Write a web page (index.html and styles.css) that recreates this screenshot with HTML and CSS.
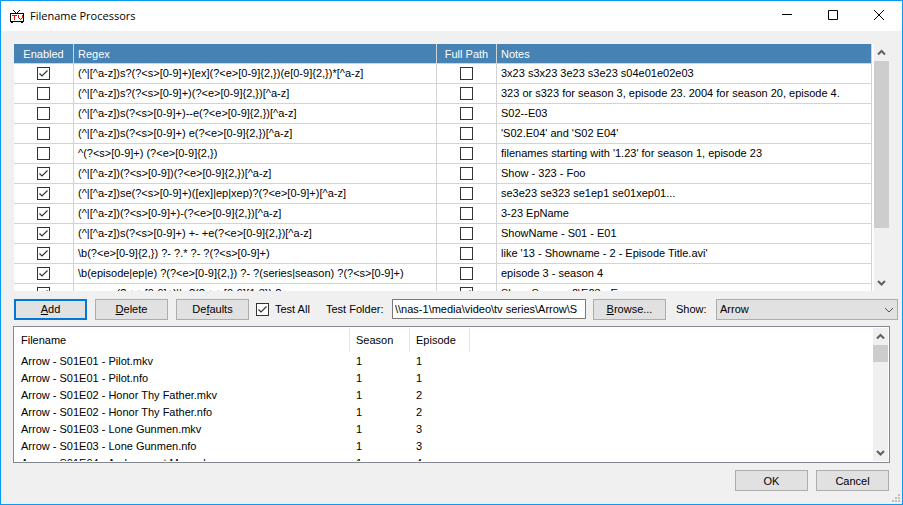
FILE: index.html
```html
<!DOCTYPE html>
<html lang="en">
<head>
<meta charset="utf-8">
<title>Filename Processors</title>
<link rel="stylesheet" href="styles.css">
</head>
<body>
<div class="window">
  <header class="titlebar">
    <svg class="app-icon" width="14" height="13" viewBox="0 0 14 13" shape-rendering="crispEdges">
      <path d="M0 3h14v9H0z" fill="#000"/><path d="M1 4h12v7H1z" fill="#fff"/>
      <path d="M3 0h1v1h1v1h1v1H5V2H4V1H3zM9 0h1v1H9v1H8v1H7V2h1V1h1zM1 12h2v1H1zM11 12h2v1h-2z" fill="#000"/>
      <path d="M2 5h5v1H5v4H4V6H2zM8 5h1v3h1v1h1V8h1V5h1v3h-1v1h-1v1h-1V9H9V8H8z" fill="#f00"/>
    </svg>
    <h1>Filename Processors</h1>
    <div class="caption-buttons">
      <button type="button" aria-label="Minimize"><svg width="10" height="10" viewBox="0 0 10 10"><path d="M0 4.500h10" stroke="#000"/></svg></button>
      <button type="button" aria-label="Maximize"><svg width="10" height="10" viewBox="0 0 10 10"><path d="M.5.5h9v9h-9z" fill="none" stroke="#000"/></svg></button>
      <button type="button" aria-label="Close"><svg width="10" height="10" viewBox="0 0 10 10"><path d="M0 0l10 10M10 0L0 10" stroke="#000"/></svg></button>
    </div>
  </header>
  <main class="content">
    <section class="grid-pane">
      <div class="grid-view">
        <table class="grid">
          <colgroup><col class="col-flag"><col class="col-regex"><col class="col-flag"><col class="col-notes"></colgroup>
          <thead><tr><th class="center">Enabled</th><th>Regex</th><th class="center">Full Path</th><th>Notes</th></tr></thead>
          <tbody>
            <tr><td class="center"><input type="checkbox" aria-label="Enabled" checked></td><td>(^|[^a-z])s?(?&lt;s&gt;[0-9]+)[ex](?&lt;e&gt;[0-9]{2,})(e[0-9]{2,})*[^a-z]</td><td class="center"><input type="checkbox" aria-label="Full Path"></td><td>3x23 s3x23 3e23 s3e23 s04e01e02e03</td></tr>
            <tr><td class="center"><input type="checkbox" aria-label="Enabled"></td><td>(^|[^a-z])s?(?&lt;s&gt;[0-9]+)(?&lt;e&gt;[0-9]{2,})[^a-z]</td><td class="center"><input type="checkbox" aria-label="Full Path"></td><td>323 or s323 for season 3, episode 23. 2004 for season 20, episode 4.</td></tr>
            <tr><td class="center"><input type="checkbox" aria-label="Enabled"></td><td>(^|[^a-z])s(?&lt;s&gt;[0-9]+)--e(?&lt;e&gt;[0-9]{2,})[^a-z]</td><td class="center"><input type="checkbox" aria-label="Full Path"></td><td>S02--E03</td></tr>
            <tr><td class="center"><input type="checkbox" aria-label="Enabled"></td><td>(^|[^a-z])s(?&lt;s&gt;[0-9]+) e(?&lt;e&gt;[0-9]{2,})[^a-z]</td><td class="center"><input type="checkbox" aria-label="Full Path"></td><td>'S02.E04' and 'S02 E04'</td></tr>
            <tr><td class="center"><input type="checkbox" aria-label="Enabled"></td><td>^(?&lt;s&gt;[0-9]+) (?&lt;e&gt;[0-9]{2,})</td><td class="center"><input type="checkbox" aria-label="Full Path"></td><td>filenames starting with '1.23' for season 1, episode 23</td></tr>
            <tr><td class="center"><input type="checkbox" aria-label="Enabled" checked></td><td>(^|[^a-z])(?&lt;s&gt;[0-9])(?&lt;e&gt;[0-9]{2,})[^a-z]</td><td class="center"><input type="checkbox" aria-label="Full Path"></td><td>Show - 323 - Foo</td></tr>
            <tr><td class="center"><input type="checkbox" aria-label="Enabled" checked></td><td>(^|[^a-z])se(?&lt;s&gt;[0-9]+)([ex]|ep|xep)?(?&lt;e&gt;[0-9]+)[^a-z]</td><td class="center"><input type="checkbox" aria-label="Full Path"></td><td>se3e23 se323 se1ep1 se01xep01...</td></tr>
            <tr><td class="center"><input type="checkbox" aria-label="Enabled" checked></td><td>(^|[^a-z])(?&lt;s&gt;[0-9]+)-(?&lt;e&gt;[0-9]{2,})[^a-z]</td><td class="center"><input type="checkbox" aria-label="Full Path"></td><td>3-23 EpName</td></tr>
            <tr><td class="center"><input type="checkbox" aria-label="Enabled" checked></td><td>(^|[^a-z])s(?&lt;s&gt;[0-9]+) +- +e(?&lt;e&gt;[0-9]{2,})[^a-z]</td><td class="center"><input type="checkbox" aria-label="Full Path"></td><td>ShowName - S01 - E01</td></tr>
            <tr><td class="center"><input type="checkbox" aria-label="Enabled" checked></td><td>\b(?&lt;e&gt;[0-9]{2,}) ?- ?.* ?- ?(?&lt;s&gt;[0-9]+)</td><td class="center"><input type="checkbox" aria-label="Full Path"></td><td>like '13 - Showname - 2 - Episode Title.avi'</td></tr>
            <tr><td class="center"><input type="checkbox" aria-label="Enabled" checked></td><td>\b(episode|ep|e) ?(?&lt;e&gt;[0-9]{2,}) ?- ?(series|season) ?(?&lt;s&gt;[0-9]+)</td><td class="center"><input type="checkbox" aria-label="Full Path"></td><td>episode 3 - season 4</td></tr>
            <tr><td class="center"><input type="checkbox" aria-label="Enabled" checked></td><td>season (?&lt;s&gt;[0-9]+)\\e?(?&lt;e&gt;[0-9]{1,3}) ?-</td><td class="center"><input type="checkbox" aria-label="Full Path" checked></td><td>Show Season 2\E23 - Epname</td></tr>
          </tbody>
        </table>
      </div>
      <div class="scrollbar">
        <svg width="15" height="17" viewBox="0 0 15 17"><path d="M4 10.500l3.500-3.500 3.500 3.500" class="arrow"/></svg>
        <div class="thumb thumb-large"></div><div class="track track-small"></div>
        <svg width="15" height="17" viewBox="0 0 15 17"><path d="M4 7l3.500 3.500L11 7" class="arrow"/></svg>
      </div>
    </section>
    <div class="toolbar">
      <button type="button" class="button default"><span><u>A</u>dd</span></button>
      <button type="button" class="button"><span><u>D</u>elete</span></button>
      <button type="button" class="button"><span>De<u>f</u>aults</span></button>
      <label class="test-all"><input type="checkbox" checked>Test All</label>
      <label class="folder-label" for="folder">Test Folder:</label>
      <input class="folder" id="folder" type="text" value="\\nas-1\media\video\tv series\Arrow\S">
      <button type="button" class="button"><span><u>B</u>rowse...</span></button>
      <label class="show-label" for="show">Show:</label>
      <div class="select-box">
        <select id="show"><option>Arrow</option></select>
        <svg width="10" height="6" viewBox="0 0 10 6"><path d="M1 1l4 4 4-4" fill="none" stroke="#505050"/></svg>
      </div>
    </div>
    <section class="list-pane">
      <div class="list-view">
        <table class="list">
          <thead><tr><th class="name">Filename</th><th class="num">Season</th><th class="num">Episode</th><th class="rest"></th></tr></thead>
          <tbody>
            <tr><td>Arrow - S01E01 - Pilot.mkv</td><td>1</td><td>1</td></tr>
            <tr><td>Arrow - S01E01 - Pilot.nfo</td><td>1</td><td>1</td></tr>
            <tr><td>Arrow - S01E02 - Honor Thy Father.mkv</td><td>1</td><td>2</td></tr>
            <tr><td>Arrow - S01E02 - Honor Thy Father.nfo</td><td>1</td><td>2</td></tr>
            <tr><td>Arrow - S01E03 - Lone Gunmen.mkv</td><td>1</td><td>3</td></tr>
            <tr><td>Arrow - S01E03 - Lone Gunmen.nfo</td><td>1</td><td>3</td></tr>
            <tr><td>Arrow - S01E04 - An Innocent Man.mkv</td><td>1</td><td>4</td></tr>
          </tbody>
        </table>
      </div>
      <div class="scrollbar">
        <svg width="15" height="17" viewBox="0 0 15 17"><path d="M4 10.500l3.500-3.500 3.500 3.500" class="arrow"/></svg>
        <div class="thumb thumb-small"></div><div class="track"></div>
        <svg width="15" height="17" viewBox="0 0 15 17"><path d="M4 7l3.500 3.500L11 7" class="arrow"/></svg>
      </div>
    </section>
    <footer class="actions">
      <button type="button" class="button">OK</button>
      <button type="button" class="button">Cancel</button>
    </footer>
  </main>
  <svg class="grip" width="8" height="8" viewBox="0 0 8 8" shape-rendering="crispEdges"><path d="M6 0h2v2H6zM3 3h2v2H3zM6 3h2v2H6zM0 6h2v2H0zM3 6h2v2H3zM6 6h2v2H6z" fill="#bfbfbf"/></svg>
</div>
</body>
</html>
```
FILE: styles.css
```css
* { box-sizing: border-box; }
body { margin: 0; font: 11px/14px "Liberation Sans", Arial, sans-serif; color: #000; }
button, input, select { font: inherit; color: inherit; }
.window { position: relative; display: flex; flex-direction: column; height: 100vh; border: 1px solid #0a99f5; background: #f0f0f0; }
.titlebar { display: flex; align-items: center; height: 30px; padding-left: 9px; background: #fff; }
h1 { margin: 0 0 0 6px; font: 11px/16px "Open Sans", sans-serif; }
.caption-buttons { display: flex; margin-left: auto; }
.caption-buttons button { display: grid; place-items: center; width: 46px; height: 30px; padding: 0 0 2px; border: 0; background: none; }
.content { flex: 1; display: flex; flex-direction: column; min-height: 0; padding: 13px; }
.grid-pane { flex: 247 1 0; display: flex; gap: 2px; min-height: 0; background: #fff; }
.grid-view, .list-view { flex: 1; min-width: 0; overflow: hidden; }
.grid, .list { width: 100%; border-spacing: 0; table-layout: fixed; white-space: nowrap; }
.grid { border-collapse: separate; }
.col-flag { width: 60px; }
.col-regex { width: 363px; }
.grid th, .grid td { height: 20px; padding: 0 4px; border-right: 1px solid #d3d3d3; border-bottom: 1px solid #d3d3d3; text-align: left; font-weight: normal; overflow: hidden; }
.grid td { padding-bottom: 1px; }
.grid th { background: #4682b4; color: #fff; }
.grid .center { padding: 0; text-align: center; }
input[type="checkbox"] { appearance: none; display: block; flex: none; width: 13px; height: 13px; margin: 0 auto; border: 1px solid #333; background: #fff; }
input[type="checkbox"]:checked { background: #fff url("data:image/svg+xml,%3Csvg xmlns='http://www.w3.org/2000/svg' viewBox='0 0 11 11'%3E%3Cpath d='M1.500 5.500l2.500 2.500 5.500-5.500' fill='none' stroke='%23333' stroke-width='1.200'/%3E%3C/svg%3E"); }
.scrollbar { display: flex; flex-direction: column; width: 15px; background: #f0f0f0; }
.scrollbar svg { flex: none; display: block; }
.arrow { fill: none; stroke: #606060; stroke-width: 2; }
.thumb { background: #cdcdcd; }
.thumb-large { flex: 167; }
.track { flex: 1; }
.track-small { flex: 46; }
.thumb-small { height: 17px; }
.toolbar { display: flex; align-items: center; height: 22px; margin: 7px -9px 6px 0; }
.button { flex: none; width: 73px; height: 21px; padding: 0; border: 1px solid #adadad; background: #e1e1e1; text-align: center; }
.button + .button { margin-left: 8px; }
.default { border: 2px solid #0078d7; }
.test-all { display: flex; align-items: center; gap: 6px; width: 70px; margin-left: 7px; white-space: nowrap; }
.test-all input[type="checkbox"] { margin: 0; }
.folder-label { width: 66px; white-space: nowrap; }
.folder { flex: 188 1 0; min-width: 0; height: 20px; margin-right: 7px; padding: 0 2px; border: 1px solid #7a7a7a; background: #fff; }
.show-label { width: 40px; margin-left: 10px; }
.select-box { position: relative; flex: 182 1 0; min-width: 0; height: 21px; }
.select-box select { appearance: none; display: block; width: 100%; height: 21px; padding: 0 3px; border: 1px solid #adadad; border-radius: 0; background: #e1e1e1; }
.select-box svg { position: absolute; right: 4px; top: 8px; }
.list-pane { flex: 133 1 0; display: flex; min-height: 0; margin: 0 -1px; padding: 1px; border: 1px solid #828790; background: #fff; }
.list th, .list td { height: 17px; padding: 0 6px; text-align: left; font-weight: normal; }
.list th { height: 24px; border-right: 1px solid #e5e5e5; }
.list .name { width: 335px; }
.list .num { width: 60px; }
.list .rest { border: 0; }
.actions { display: flex; justify-content: flex-end; margin-top: 7px; }
.grip { position: absolute; right: 2px; bottom: 2px; }
```
